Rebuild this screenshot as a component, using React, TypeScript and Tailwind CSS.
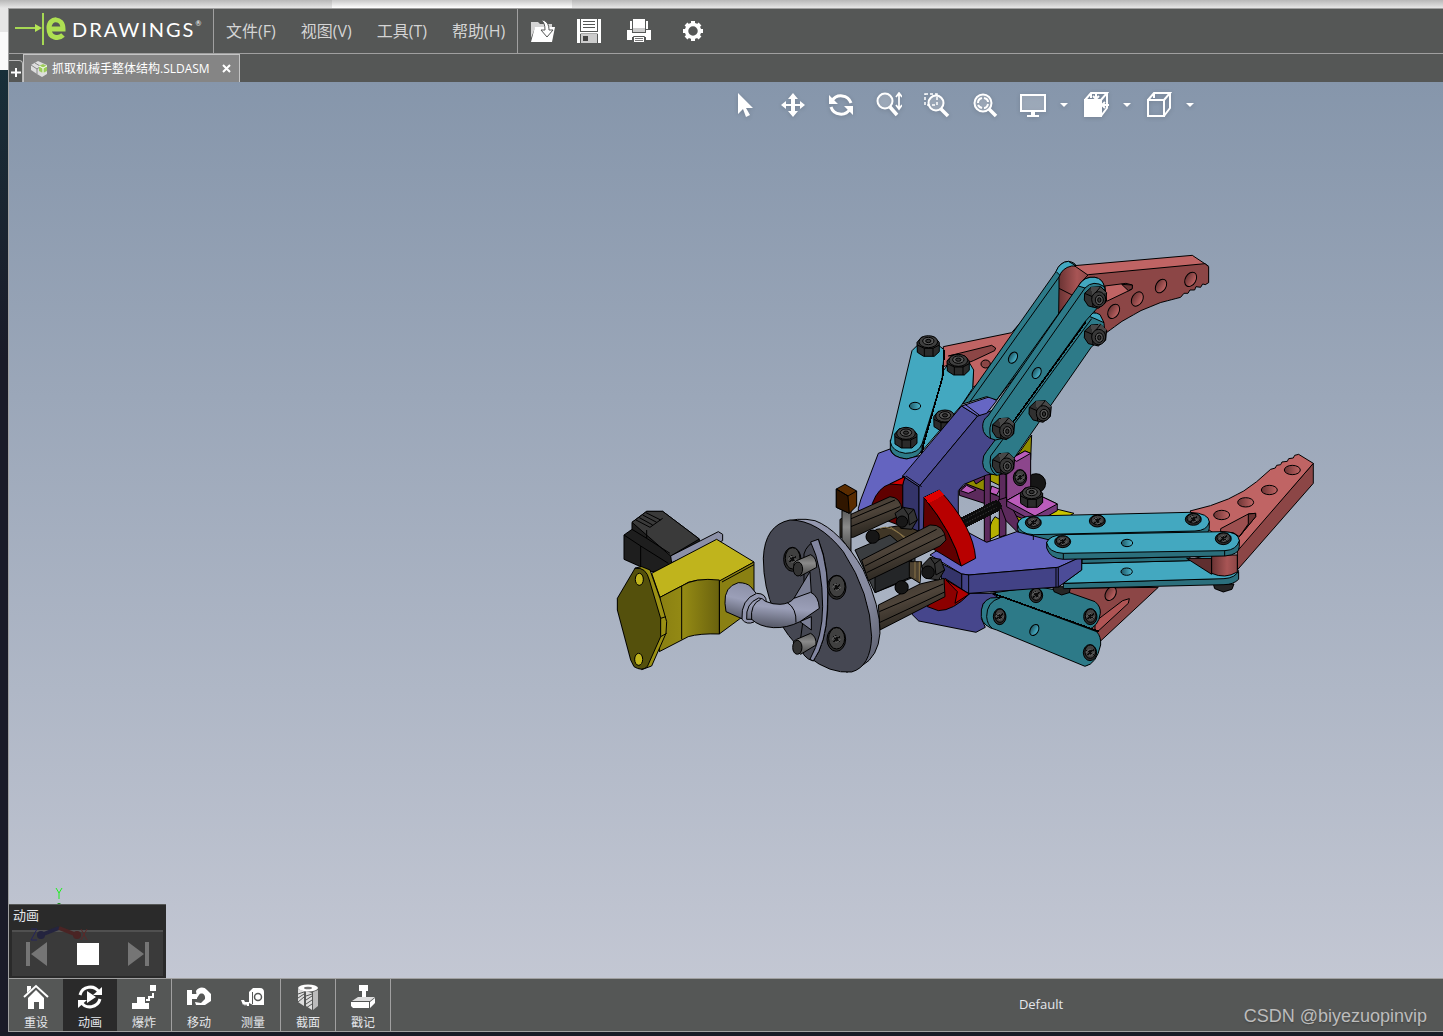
import type { ReactNode } from "react";

type IconProps = { children: ReactNode; w?: number; h?: number };

const Icon = ({ children, w = 26, h = 26 }: IconProps) => (
  <svg width={w} height={h} viewBox={`0 0 ${w} ${h}`} fill="none" aria-hidden="true">
    {children}
  </svg>
);

const menus = ["文件(F)", "视图(V)", "工具(T)", "帮助(H)"];

const fileTools = [
  {
    label: "打开",
    wide: false,
    icon: (
      <Icon>
        <path d="M1 4h7l2 2h12v4H5L1 20z" fill="#d4d4d4" />
        <path d="M5 9h20l-3 15H1z" fill="#fff" />
        <path d="M11 2c6 0 8 5 8 10h4l-6 7-6-7h4c0-5-1-8-4-10z" fill="#fff" stroke="#555756" />
      </Icon>
    ),
  },
  {
    label: "保存",
    wide: false,
    icon: (
      <Icon>
        <path d="M1 1h24v24H1z" fill="#fff" />
        <path d="M4.500 1v12M21.500 1v12M4.500 25v-9h17v9" stroke="#555756" />
        <path d="M7 3.500h12M7 6.500h12M7 9.500h12M4 13.500h18" stroke="#555756" />
        <path d="M5 16h16v9H5z" fill="#ccc" />
        <path d="M7 18h5v5H7z" fill="#444" />
      </Icon>
    ),
  },
  {
    label: "打印",
    wide: true,
    icon: (
      <Icon>
        <path d="M4 3h2v8H4zM20 3h2v8h-2zM7 1h12v9H7z" fill="#fff" />
        <path d="M7 10h12v4H7z" fill="#ccc" />
        <path d="M1 12h5v3h14v-3h5v10h-5v-3H6v3H1z" fill="#fff" />
        <path d="M7.500 18.500h11v6h-11z" fill="#fff" stroke="#555756" />
        <path d="M9 20.500h8M9 22.500h8" stroke="#777" />
      </Icon>
    ),
  },
  {
    label: "选项",
    wide: true,
    icon: (
      <Icon>
        <circle cx="13" cy="13" r="6.500" stroke="#fff" strokeWidth="3.500" />
        <path d="M13 3v3M13 20v3M3 13h3M20 13h3M6 6l2 2M18 18l2 2M20 6l-2 2M8 18l-2 2" stroke="#fff" strokeWidth="4" />
      </Icon>
    ),
  },
];

const Lens = () => (
  <>
    <circle cx="11" cy="11" r="8.500" fill="#fff3" stroke="#fff" strokeWidth="2" />
    <path d="m17 17 7 7" stroke="#fff" strokeWidth="3.500" />
  </>
);

const Cube = ({ solid = false }: { solid?: boolean }) => (
  <>
    <path d="M2 8h16v16H2z" fill={solid ? "#fff" : "none"} stroke="#fff" strokeWidth="2" />
    <path d="m2 8 6-7h16l-6 7M24 1v15l-6 8M8 2v4" stroke="#fff" strokeWidth="2" />
  </>
);

const mouseTools = [
  { label: "选择", icon: <path d="M6 1v21l5-5 3 8 4-2-4-7h7z" fill="#fff" /> },
  {
    label: "平移",
    icon: <path d="M13 1l5 6h-3v5h5V9l5 4-5 4v-3h-5v5h3l-5 6-5-6h3v-5H6v3l-5-4 5-4v3h5V7H8z" fill="#fff" />,
  },
  {
    label: "旋转",
    icon: (
      <>
        <path d="M4 9A10.500 10.500 0 0 1 23 11M22 17A10.500 10.500 0 0 1 3 15" stroke="#fff" strokeWidth="3" />
        <path d="M1 3v9h9zM25 23v-9h-9z" fill="#fff" />
      </>
    ),
  },
  {
    label: "缩放",
    icon: (
      <>
        <circle cx="9" cy="9" r="7.500" fill="#fff3" stroke="#fff" strokeWidth="2" />
        <path d="m14 15 7 8" stroke="#fff" strokeWidth="3.500" />
        <path d="M23 2v14M20 5l3-4 3 4M20 13l3 4 3-4" stroke="#fff" strokeWidth="1.700" />
      </>
    ),
  },
  {
    label: "局部放大",
    icon: (
      <>
        <path d="M1 2h12v11H1z" stroke="#fff" strokeWidth="1.500" strokeDasharray="3 2" />
        <circle cx="12" cy="11" r="7.500" fill="#fff3" stroke="#fff" strokeWidth="2" />
        <path d="m17 17 7 7" stroke="#fff" strokeWidth="3.500" />
      </>
    ),
  },
  {
    label: "整屏显示",
    icon: (
      <>
        <Lens />
        <path d="M6 11q0-4 4-5M12 6q4 1 4 4M16 12q-1 4-4 4M10 16q-3-1-4-3" stroke="#fff" strokeWidth="2" />
      </>
    ),
  },
];

const displayTools = [
  {
    label: "显示",
    icon: (
      <>
        <path d="M1 3h24v16H1z" fill="#fff3" stroke="#fff" strokeWidth="2" />
        <path d="M11 20h4v3h4v2H7v-2h4z" fill="#fff" />
      </>
    ),
  },
  {
    label: "透视图",
    icon: (
      <>
        <Cube solid />
        <path d="M13 0v7M10 4l3 3 3-3M26 13h-7M22 10l-3 3 3 3" stroke="#fff" strokeWidth="2" />
      </>
    ),
  },
  { label: "视图方向", icon: <Cube /> },
];

const bottomTools = [
  {
    label: "重设",
    active: false,
    line: false,
    icon: (
      <>
        <path d="M1 13 13 2l12 11" stroke="#fff" strokeWidth="2" />
        <path d="M4 2h4v3L4 9zM5 14l8-8 8 8v11h-5v-7h-5v7H5z" fill="#fff" />
      </>
    ),
  },
  {
    label: "动画",
    active: true,
    line: false,
    icon: (
      <>
        <path d="M3 11A10.500 10.500 0 0 1 22 8M23 15A10.500 10.500 0 0 1 4 18" stroke="#fff" strokeWidth="3" />
        <path d="M25 3v8h-9zM1 24v-8h9zM10 7l9 6-9 6z" fill="#fff" />
      </>
    ),
  },
  {
    label: "爆炸",
    active: false,
    line: true,
    icon: (
      <>
        <path d="M1 19h5v-6h8v6h4v6H1zM19 1h6v6h-6z" fill="#fff" />
        <path d="M22 9v4h-4v3h-3" stroke="#fff" strokeWidth="2" />
      </>
    ),
  },
  {
    label: "移动",
    active: false,
    line: false,
    icon: (
      <>
        <path d="M1 6h5v4h5v5H6v6H1z" fill="#fff" />
        <path d="M10 7c2-4 8-5 11-1l4 4v7l-6 4h-9l-1-3 6 1 4-4c1-5-4-7-6-4l-2 3z" fill="#fff" />
      </>
    ),
  },
  {
    label: "测量",
    active: false,
    line: true,
    icon: (
      <>
        <path d="M9 8l4-4h7c3 0 4 2 4 4v13H13l-4-2z" fill="#fff" />
        <circle cx="18" cy="13" r="3.500" stroke="#555756" strokeWidth="1.500" />
        <path d="M1 16h3l1 2h4v4H7l-1-2-1 2-1-2-1 1z" fill="#fff" />
        <path d="M12.500 8v12" stroke="#555756" />
      </>
    ),
  },
  {
    label: "截面",
    active: false,
    line: true,
    icon: (
      <>
        <ellipse cx="13" cy="4" rx="10" ry="3.500" fill="#fff" />
        <path d="M3 5l6 2v15l-6-4zM11 7l6 2v17l-6-4z" fill="#ddd" />
        <path d="M18 8l5-2v16l-5 4z" fill="#bbb" />
        <path d="m3 10 6-2M3 14l6-4M3 18l6-5M11 12l6-2M11 16l6-4M11 20l6-4M11 24l6-4" stroke="#555756" />
        <ellipse cx="13" cy="4" rx="4" ry="1.300" fill="#777" />
      </>
    ),
  },
  {
    label: "戳记",
    active: false,
    line: true,
    icon: (
      <>
        <path d="M9 1h9v6h-2v8h-4V7H9z" fill="#fff" />
        <path d="m2 17 6-4h17l-5 4z" fill="#ddd" />
        <path d="M1 18h18v6H3l-2-2zM20 18l5-4v5l-5 5z" fill="#fff" />
      </>
    ),
  },
];

const TEAL = "#2d7a88";
const CYAN = "#43a8c0";
const ROSE = "#c06464";
const BRICK = "#8c4646";

type Spot = { x: number; y: number };

const Nut = ({ x, y }: Spot) => (
  <g transform={`translate(${x} ${y})`}>
    <path d="M-33-12-14-30 15-32 33-14 30 16 8 33-22 26-34 8z" fill="#303030" />
    <path d="M-14-30 15-32 33-14-10-2z" fill="#484848" stroke="none" />
    <path d="M-33-12-10-2M-10-2-8 30M-10-2 15-32" fill="none" />
    <ellipse cx="9" cy="6" rx="21" ry="23" fill="#383838" />
    <ellipse cx="11" cy="8" rx="12" ry="14" fill="#555" />
    <ellipse cx="11" cy="8" rx="5" ry="7" fill="#333" />
  </g>
);

const TopNut = ({ x, y }: Spot) => (
  <g transform={`translate(${x} ${y})`}>
    <path d="M-34-10-20-26H18L33-10V18L18 32H-14L-33 20z" fill="#2b2b2b" />
    <path d="M-33-2-12 8H14L33-2M-12 8V32M14 8V32" fill="none" />
    <ellipse cy="-12" rx="28" ry="18" fill="#3f3f3f" />
    <ellipse cy="-14" rx="17" ry="11" fill="#555" />
    <ellipse cy="-14" rx="8" ry="5" fill="#333" />
  </g>
);

const Screw = ({ x, y, rx = 24, ry = 18 }: Spot & { rx?: number; ry?: number }) => (
  <g transform={`translate(${x} ${y})`}>
    <ellipse rx={rx} ry={ry} fill="#2a2a2a" />
    <ellipse cx="1" cy="-3" rx={rx - 4} ry={ry - 4} fill="#404040" />
    <path d="M-10-8 10 7M11-9-9 7M-1-12 2 9" stroke="#0c0c0c" strokeWidth="4" />
    <path d="M-12 1Q-8-10 2-10M12-1Q10 8-2 9" stroke="#666" fill="none" />
  </g>
);

const Hole = ({ x, y, rx = 17, ry = 11, tilt = 0, fill = "url(#bore)" }: Spot & { rx?: number; ry?: number; tilt?: number; fill?: string }) => (
  <ellipse rx={rx} ry={ry} fill={fill} transform={`translate(${x} ${y}) rotate(${tilt})`} />
);

// Each part is drawn in its own frame, three units to the pixel
const Part = ({ x, y, children }: Spot & { children: ReactNode }) => (
  <g transform={`translate(${x} ${y}) scale(.3333)`}>{children}</g>
);

const Defs = () => (
  <defs>
    <linearGradient id="bore" x2="1">
      <stop stopColor="#1f5663" />
      <stop offset="1" stopColor="#4cb8d0" />
    </linearGradient>
    <linearGradient id="boreRose" x2="1">
      <stop stopColor="#6c3434" />
      <stop offset="1" stopColor="#c06464" />
    </linearGradient>
    <linearGradient id="knuckle" x2="1">
      <stop stopColor="#6a3333" />
      <stop offset=".6" stopColor="#a85555" />
      <stop offset="1" stopColor="#8c4646" />
    </linearGradient>
    <linearGradient id="pipe" x1=".6" x2=".4" y2="1">
      <stop stopColor="#8b8fa6" />
      <stop offset=".45" stopColor="#9b9fb8" />
      <stop offset="1" stopColor="#555866" />
    </linearGradient>
    <linearGradient id="rim" x2="1" y2="1">
      <stop stopColor="#9a9eb6" />
      <stop offset=".7" stopColor="#85899e" />
      <stop offset="1" stopColor="#555866" />
    </linearGradient>
    <linearGradient id="rod" x2=".4" y2="1">
      <stop stopColor="#3c352c" />
      <stop offset=".5" stopColor="#4e443a" />
      <stop offset="1" stopColor="#25221c" />
    </linearGradient>
    <linearGradient id="pin" x2="0" y2="1">
      <stop stopColor="#5c5c5c" />
      <stop offset=".4" stopColor="#8a8a8a" />
      <stop offset="1" stopColor="#484848" />
    </linearGradient>
    <linearGradient id="olive" x2="1">
      <stop stopColor="#8a8012" />
      <stop offset=".4" stopColor="#948a14" />
      <stop offset="1" stopColor="#6a620e" />
    </linearGradient>
  </defs>
);

const RearFinger = () => (
  <Part x={840} y={320}>
    <path d="M310 80 515 38 600-60 560 40 440 180 398 202 400 150 370 120 310 140z" fill={ROSE} />
    <path d="M325 108 455 76 467 84 464 92 400 122 385 128 355 102z" fill="#8c4646" />
    <Hole x={437} y={132} rx={14} ry={12} fill="#8c4646" />
    <path d="M308 155 328 128H388L401 150 398 205 365 255 240 400 245 375 300 180z" fill={CYAN} />
    <TopNut x={315} y={300} />
    <path d="M151 360V388Q160 414 200 417 238 412 246 388V365z" fill={TEAL} />
    <path d="M216 92 232 76H296L313 90 306 180 246 372Q236 400 196 400 156 394 151 366z" fill={CYAN} />
    <path d="M313 90 308 170 250 375 246 404" fill="none" strokeWidth="5" />
    <Hole x={225} y={258} />
    <TopNut x={265} y={77} />
    <TopNut x={355} y={133} />
    <TopNut x={198} y={352} />
    <path d="M55 565 62 540 115 400 150 387Q155 412 200 417L246 405 330 340 200 475 190 600H55z" fill="#6464c0" />
  </Part>
);

const Hub = () => (
  <Part x={840} y={460}>
    <path d="M575-75 572 0 520 0 540-25z" fill="#8f8b00" />
    <path d="M600 150 620 140 702 160 650 190z" fill="#c8c400" />
    <path d="M375 60 440 40V118Q405 118 386 98z" fill="#8f8b00" />
    <path d="M450 10 482 25V78L450 62z" fill="#a39e00" />
    <path d="M446 240Q444 195 465 170L482 180V222z" fill="#b5b000" />
    <path d="M515 155 548 160 540 200 518 190z" fill="#a39e00" />
    <path d="M358 88 380 72 500 118 605 170 592 196 470 142 358 106z" fill="#5c2a5c" />
    <path d="M362 92 380 76 408 90 385 100zM455 78 480 88 470 105 450 98zM500 168 530 178 510 190z" fill="#bb5cbb" />
    <path d="M433-20H451V247H433zM478 0H498V225L478 232z" fill="#5c2a5c" />
    <path d="M475 120 500 112 548 205 538 222 498 182z" fill="#5c2a5c" />
    <path d="M400 60 433 40V56L408 72z" fill="#5c2a5c" />
    <circle cx="588" cy="70" r="29" fill="#161616" />
    <path d="M515-5 555-27 572-20V82L500 122V20z" fill="#8c468c" />
    <path d="M515-5 555-27 572-20 530 4z" fill="#bb5cbb" />
    <Screw x={540} y={53} rx={20} ry={24} />
    <path d="M500 122 560 88 652 132V152L588 188 500 140z" fill="#74397a" />
    <path d="M500 122 560 88 652 132 585 168z" fill="#bb5cbb" />
    <TopNut x={575} y={110} />
    <path d="m370 188 98-50" stroke="#0c0c0c" strokeWidth="34" strokeLinecap="round" />
    <path d="m372 192 98-50M368 180l98-50" stroke="#3a3a3a" strokeWidth="3" strokeDasharray="4 5" />
  </Part>
);

const LowerFinger = () => (
  <>
    <Part x={1000} y={440}>
      <path d="M205 445 475 442 302 603 245 575z" fill={BRICK} />
      <Hole x={332} y={461} rx={15} ry={22} tilt={30} fill="url(#boreRose)" />
      <path d="M285 545 368 482 388 476 385 490 296 572 285 571z" fill="#b05454" />
      <path d="M-30 460 110 440 200 455 285 485Q303 500 301 520 296 560 262 570L-30 475z" fill={TEAL} />
      <Screw x={108} y={466} rx={20} ry={22} />
      <Screw x={271} y={530} rx={20} ry={24} />
    </Part>
    <Part x={840} y={460}>
      <path d="M215 462 236 435 370 400H455L478 415 430 430 424 475 436 502 408 517 236 483z" fill="#46468c" />
      <path d="M424 470Q420 425 452 414L490 412 770 515Q784 530 782 555 770 612 735 619L470 510Q428 500 424 470z" fill={TEAL} />
      <path d="M480 414Q440 425 440 470 442 494 456 504" fill="none" />
      <path d="m458 400 320 115" strokeWidth="5" />
      <Hole x={583} y={510} rx={12} ry={18} tilt={30} />
      <Screw x={479} y={470} rx={19} ry={24} />
      <Screw x={750} y={578} rx={20} ry={24} />
    </Part>
  </>
);

const RightFinger = () => (
  <Part x={1000} y={440}>
    <path d="M158 440H212L208 458 185 465 162 455zM640 432H702L696 448 670 456 644 446z" fill="#262626" />
    <path d="M190 430 672 415 716 395V418Q700 434 672 434L190 446z" fill="#2b6f7c" />
    <path d="M190 430 246 370 560 362 640 340 716 392Q706 414 672 416z" fill={CYAN} />
    <path d="M246 358 570 350V362L246 370z" fill="#2b6f7c" />
    <Hole x={380} y={395} />
    <path d="M560 355H635V403z" fill="#5f2f2f" />
    <path d="M940 70V130L712 390V330z" fill={BRICK} />
    <path d="M570 213Q700 185 770 125L812 88 826 84 830 76 842 74 846 66 862 64 866 56 880 54 884 46 896 43 940 70 715 330 620 265z" fill={ROSE} />
    <path d="M662 266 745 222 767 220V230L718 290 700 278 662 275z" fill="#9c4f4f" />
    <path d="M745 222V252L718 290 767 230V220z" fill="#6c3434" />
    <Hole x={877} y={90} rx={24} ry={14} fill="url(#boreRose)" />
    <Hole x={808} y={150} rx={24} ry={14} fill="url(#boreRose)" />
    <Hole x={737} y={187} rx={24} ry={14} fill="url(#boreRose)" />
    <Hole x={665} y={225} rx={24} ry={14} fill="url(#boreRose)" />
    <path d="M635 345H712V396Q675 418 635 400z" fill="url(#knuckle)" />
    <path d="M52 250V268Q62 298 100 300L590 288Q628 285 628 265V245z" fill="#2b6f7c" />
    <path d="M52 252Q58 228 100 228L570 217Q628 220 628 246 622 272 585 273L100 284Q58 282 52 252z" fill={CYAN} />
    <Screw x={100} y={248} />
    <Screw x={292} y={243} />
    <Screw x={580} y={238} />
  </Part>
);

const RightBracket = () => (
  <Part x={840} y={460}>
    <path d="M270 285 380 215 440 247 530 215 640 243 720 300 655 322 387 345 365 342z" fill="#6464c0" />
    <path d="M365 342 387 345 655 322 725 290V330L655 381 387 400 365 396z" fill="#424286" />
    <path d="M655 322 725 290V330L655 381z" fill="#4c4c98" />
    <path d="M300 308 365 342V398L305 362z" fill="#34346a" />
    <path d="M386 345V400M648 322V381" />
  </Part>
);

const FrontLink = () => (
  <Part x={1000} y={440}>
    <path d="M140 306V324Q150 356 190 358L675 348Q718 344 718 320V300z" fill="#2b6f7c" />
    <path d="M140 308Q148 286 190 284L670 275Q716 276 718 302 710 330 675 332L190 340Q146 338 140 308z" fill={CYAN} />
    <path d="M190 340V358M674 332V348M100 284V300" />
    <Hole x={381} y={309} />
    <Screw x={188} y={305} />
    <Screw x={670} y={296} />
  </Part>
);

const CenterBracket = () => (
  <Part x={840} y={320}>
    <path d="M188 468 237 500V645L188 620z" fill="#34346a" />
    <path d="M188 468 365 258 413 288 237 500z" fill="#50509c" />
    <path d="M237 500 413 288 460 270 470 460 440 465 372 493 355 512V640L390 650 300 660H237z" fill="#46468a" />
    <path d="M365 258 450 230 470 242 440 280 413 288z" fill="#6666c4" />
    <path d="m198 468 47 32M374 252l45 34" />
  </Part>
);

const TopFinger = () => (
  <Part x={960} y={240}>
    <path d="M8 492 290 92Q300 66 325 64 345 66 352 82L330 200 110 480 80 470z" fill={TEAL} />
    <path d="M288 94Q300 66 325 64L352 80 320 96 300 106z" fill={CYAN} />
    <path d="M28 488 305 100M110 480 390 90M116 484 380 115" fill="none" />
    <Hole x={159} y={353} rx={12} ry={18} tilt={30} />
    <path d="M297 145V112Q305 84 335 78H380L388 105 296 220z" fill="url(#knuckle)" />
    <path d="M297 145 336 165" />
    <path d="M343 77 697 46 745 78 385 106z" fill={ROSE} />
    <path d="M385 104 735 71 746 80V128L736 134 728 132 722 142 708 140 704 150 690 150 684 160 672 160 662 172Q540 195 430 285L400 205 370 120z" fill={BRICK} />
    <path d="M435 138 498 130 517 135 515 148 440 184z" fill={ROSE} />
    <path d="M485 133 505 152 517 146V135z" fill="#6c3434" />
    <Hole x={692} y={118} rx={16} ry={23} tilt={30} fill="url(#boreRose)" />
    <Hole x={603} y={138} rx={15} ry={22} tilt={30} fill="url(#boreRose)" />
    <Hole x={532} y={177} rx={16} ry={23} tilt={30} fill="url(#boreRose)" />
    <Hole x={461} y={214} rx={16} ry={23} tilt={30} fill="url(#boreRose)" />
    <path d="M80 634 385 228Q400 214 418 225L432 250 436 290 395 320 242 540 162 655Q150 702 112 706 68 702 68 668 68 645 80 634z" fill={TEAL} />
    <path d="M385 228Q400 212 420 224L432 248 405 236z" fill={CYAN} />
    <path d="M92 648 395 236M92 648Q84 690 110 706" fill="none" />
    <path d="M84 528 355 138Q372 108 405 112 430 118 434 145V180L375 245 160 545Q150 598 106 600 68 592 68 560 68 538 84 528z" fill={TEAL} />
    <path d="M355 138Q372 108 405 112 428 116 433 140 400 118 375 144z" fill={CYAN} />
    <path d="M100 536 375 144M100 536Q84 560 92 597" fill="none" />
    <path d="M160 545 378 245" strokeWidth="5" />
    <Hole x={230} y={399} rx={12} ry={18} tilt={30} />
    <Nut x={407} y={172} />
    <Nut x={407} y={285} />
    <Nut x={241} y={514} />
    <Nut x={131} y={566} />
    <Nut x={131} y={671} />
  </Part>
);

const Rods = () => (
  <Part x={840} y={460}>
    <path d="M97 130Q115 82 150 72L195 50 188 72V200L97 165z" fill="#600000" />
    <path d="M150 72 195 50 188 75z" fill="#d00000" />
    <path d="M262 440 315 355 388 402Q340 452 295 452z" fill="#8c0000" />
    <path d="M318 360 352 395 345 430 388 402z" fill="#b00000" />
    <path d="M250 215 252 112Q340 220 364 318L305 282 250 250z" fill="#600000" />
    <path d="M252 112 298 90Q400 200 407 295L364 318Q340 220 252 112z" fill="#b80000" />
    <path d="M252 112 298 90 312 105 267 130z" fill="#e00000" stroke="none" />
    <path d="M85 225 110 208 190 195 240 215 220 255 110 250z" fill="#403626" />
    <path d="M120 205Q150 190 200 240M150 200 200 235" stroke="#8a7448" fill="none" />
    <path d="M0 178 150 110Q182 112 186 150L178 168 40 232H0z" fill="url(#rod)" />
    <path d="M15 184 165 120M20 205 180 140" />
    <path d="M45 270 150 225 225 290V350L105 398z" fill="#3a3d40" />
    <path d="M105 340 215 300V350L105 398z" fill="#242628" />
    <path d="M208 305H245L240 370 208 350z" fill="#4c4130" />
    <path d="M225 305V355M238 305V365" stroke="#8a7448" />
    <path d="M65 300 270 195Q312 192 318 240L300 258 85 362z" fill="url(#rod)" />
    <path d="M75 318 290 208M80 338 312 225" />
    <path d="M115 435 240 372 312 355 315 410 120 510z" fill="url(#rod)" />
    <path d="M118 455 310 372M118 488 314 396" />
    <circle cx="98" cy="230" r="20" fill="#161616" />
    <circle cx="185" cy="382" r="20" fill="#161616" />
    <path d="M165 160 190 142 222 148 232 180 215 208 182 205z" fill="#333" />
    <path d="M190 142 205 165 222 148M205 165 208 195 232 180" fill="none" />
    <circle cx="186" cy="185" r="17" fill="#181818" />
    <path d="M245 318 270 292 302 298 314 330 296 360 258 355z" fill="#333" />
    <path d="M270 292 284 312 302 298M284 312 288 345 314 330" fill="none" />
    <circle cx="264" cy="337" r="19" fill="#181818" />
  </Part>
);

const Flange = () => (
  <Part x={600} y={470}>
    <path d="M726 122H753V245L726 208z" fill="url(#pin)" />
    <path d="M709 57 735 43 770 63V108L748 130 709 112z" fill="#5a2c00" />
    <path d="M709 57 744 78 748 130 709 112z" fill="#301600" />
    <path d="M709 57 744 78 770 63" fill="none" />
    <path d="M545 160Q590 140 645 152 720 180 790 300 842 410 840 490 835 560 785 588L740 607z" fill="url(#rim)" />
    <path d="M490 265Q494 165 570 150 655 150 730 245 812 370 815 500 812 590 755 606 690 612 625 560 490 440 490 265z" fill="#454752" />
    <Screw x={577} y={268} rx={26} ry={36} />
    <path d="M612 252Q620 222 655 208 690 290 683 420 678 520 640 573 605 565 600 520L612 430z" fill="#454752" />
    <path d="M632 216 655 208Q690 300 682 420 678 520 640 573L630 568Q668 500 668 410 668 290 632 216z" fill="#8286a0" />
    <path d="M582 385 630 305 634 370 600 384zM600 455 634 480V440z" fill="#7c8096" />
    <path d="M590 272 632 254Q650 262 650 292L602 318Q580 305 582 280z" fill="url(#pin)" />
    <ellipse cx="594" cy="297" rx="14" ry="21" fill="#333" />
    <path d="M590 508 632 490Q650 500 648 525L602 553Q580 540 580 515z" fill="url(#pin)" />
    <ellipse cx="592" cy="532" rx="14" ry="21" fill="#333" />
    <Screw x={710} y={352} rx={28} ry={36} />
    <Screw x={709} y={508} rx={28} ry={36} />
  </Part>
);

const Drive = () => (
  <Part x={600} y={470}>
    <path d="M72 195 96 178V157L140 124 188 124 298 207 300 240 210 300 155 305 72 268z" fill="#1e1e1e" />
    <path d="M96 157 140 124 188 124 298 207 212 258z" fill="#3a3a3a" />
    <path d="M96 178 140 205 210 250M72 195 122 228 205 280M122 228V292M140 205V180M108 150 150 172 188 145M118 143l40 22M128 135l42 22M138 128l44 22" fill="none" />
    <path d="M212 258 355 185 368 193V212L215 278z" fill="#8c90a8" />
    <path d="M155 310 350 208 462 276 358 335Q280 320 245 348L180 382z" fill="#c0b41c" />
    <path d="M358 333 462 276V415L358 492z" fill="#8a8012" />
    <path d="M180 382 245 348Q285 322 358 330V492Q300 490 265 500L178 545z" fill="url(#olive)" />
    <path d="M245 348V508M366 336 462 284" fill="none" />
    <path d="M105 294 125 290 150 300 180 385 200 455 198 490 155 588 125 599z" fill="#9a9014" />
    <path d="M105 295Q138 290 148 330L182 445V500L142 590Q125 605 102 590L92 570 52 420V385z" fill="#54500c" />
    <path d="M182 445 198 440M182 500 200 490" />
    <ellipse cx="118" cy="328" rx="12" ry="18" fill="#c0b41c" />
    <ellipse cx="116" cy="568" rx="12" ry="18" fill="#c0b41c" />
    <path d="M375 400Q372 350 415 338 440 338 452 350L470 372 430 448 378 425z" fill="url(#pipe)" />
    <path d="M426 448Q422 388 470 370 500 370 499 398L462 456Q440 466 426 448z" fill="#9296ae" />
    <path d="M440 448Q436 400 476 384 488 384 496 394 520 404 540 403 568 402 582 385L632 367Q656 378 658 415L600 455Q560 475 520 473 478 470 455 448z" fill="url(#pipe)" />
    <path d="M455 450Q450 402 482 388M562 398Q590 415 588 458" fill="none" />
  </Part>
);

const Model = () => (
  <svg
    className="h-full w-full"
    viewBox="9 82 1434 896"
    stroke="#000"
    strokeWidth="3"
    strokeLinejoin="round"
    shapeRendering="crispEdges"
    role="img"
    aria-label="抓取机械手整体结构"
  >
    <Defs />
    <RearFinger />
    <Hub />
    <LowerFinger />
    <RightFinger />
    <RightBracket />
    <FrontLink />
    <CenterBracket />
    <TopFinger />
    <Rods />
    <Flange />
    <Drive />
  </svg>
);

const Triad = () => (
  <svg className="pointer-events-none absolute bottom-8 left-5" width="64" height="60" viewBox="0 0 64 60" fill="none" aria-hidden="true">
    <path d="m27 2 3 5 3-5M30 7v6" stroke="#1df01d" />
    <path d="M28 18q2-2 4 0z" fill="#0a8a0a" />
    <path d="M2 43h6L2 54h6" stroke="#25255c" />
    <path d="m52 43 6 11M58 43l-6 11" stroke="#5c2828" />
    <path d="m30 42-18 7" stroke="#24243f" strokeWidth="4" />
    <path d="m30 42 18 7" stroke="#4a2424" strokeWidth="4" />
    <circle cx="12" cy="49" r="4" fill="#24243f" />
    <circle cx="48" cy="49" r="4" fill="#4a2424" />
  </svg>
);

const AnimationPanel = () => (
  <section className="absolute bottom-0 left-0 border-t border-[#555756] bg-[#2a2a2a] px-[3px] pb-[2px]">
    <h2 className="h-[25px] px-px text-[13px] leading-5 text-gray-200">动画</h2>
    <div className="flex h-[46px] w-[151px] items-center justify-between border-t-2 border-[#505050] bg-[#3a3a3a] px-3">
      <button aria-label="上一步">
        <Icon>
          <path d="M2 1h4v24H2zM23 1v24L7 13z" fill="#757575" />
        </Icon>
      </button>
      <button aria-label="停止">
        <Icon w={22} h={22}>
          <path d="M0 0h22v22H0z" fill="#fff" />
        </Icon>
      </button>
      <button aria-label="下一步">
        <Icon>
          <path d="M20 1h4v24h-4zM3 1v24l16-12z" fill="#757575" />
        </Icon>
      </button>
    </div>
  </section>
);

const Logo = () => (
  <div className="flex w-[205px] items-center gap-[6px] border-r border-[#a0a0a0] pb-1 pl-[6px]">
    <svg width="51" height="34" viewBox="0 0 51 34" fill="none" aria-hidden="true">
      <path d="M0 16h22" stroke="#a6d854" strokeWidth="2" />
      <path d="m20 12 7 4-7 4z" fill="#b5e655" />
      <path d="M28 1v32" stroke="#a6d854" strokeWidth="2" />
      <path d="M35 17h13c0-12-14-12-14-1 0 11 10 11 14 7" stroke="#aee052" strokeWidth="5" />
    </svg>
    <span className="flex font-[Lato,sans-serif] text-[20px] leading-6 tracking-widest text-white">
      DRAWINGS<small className="text-[7px] leading-3">®</small>
    </span>
  </div>
);

const Header = () => (
  <header className="flex h-[46px] border-y border-[#a0a0a0]">
    <Logo />
    <nav className="flex items-center gap-[25px] border-r border-[#a0a0a0] px-3">
      {menus.map((name) => (
        <button key={name} className="text-[16px] text-[#d4d4d4]">
          {name}
        </button>
      ))}
    </nav>
    <div className="flex items-center gap-5 pl-3">
      {fileTools.map((tool) => (
        <button key={tool.label} aria-label={tool.label} className={tool.wide ? "px-1" : ""}>
          {tool.icon}
        </button>
      ))}
    </div>
  </header>
);

const TabBar = () => (
  <div className="flex h-7 items-end">
    <button aria-label="新建标签" className="flex h-[22px] w-[14px] items-center justify-center rounded-tr border-t border-r border-[#b8b8b8]">
      <Icon w={10} h={10}>
        <path d="M5 1v9M0 5.500h10" stroke="#fff" strokeWidth="2" />
      </Icon>
    </button>
    <div className="flex h-7 items-center border border-b-0 border-[#c4c4c4] bg-[#858585] pr-2 pl-[6px] text-white">
      <Icon w={18} h={18}>
        <path d="M1 5 8 1l9 4v9l-5 3-5-3-6-4z" fill="#ddd" />
        <path d="M1 5 7 9v5M7 9l4-3M5 3l5 3" stroke="#888" />
        <path d="m9 6 4-2 4 2v5l-4 2-4-2z" fill="#9ccc5a" />
        <path d="m9 6 4 2 4-2M13 8v5" stroke="#fff" />
      </Icon>
      <span className="ml-1 text-[12px]">抓取机械手整体结构.SLDASM</span>
      <button aria-label="关闭" className="ml-3">
        <Icon w={9} h={9}>
          <path d="m1 1 7 7M8 1 1 8" stroke="#fff" strokeWidth="2" />
        </Icon>
      </button>
    </div>
  </div>
);

const ViewToolbar = () => (
  <div className="absolute top-[10px] left-1/2 flex items-center gap-[22px] pl-[6px] drop-shadow-sm">
    {mouseTools.map((tool) => (
      <button key={tool.label} aria-label={tool.label}>
        <Icon>{tool.icon}</Icon>
      </button>
    ))}
    <div className="flex gap-[15px]">
      {displayTools.map((tool) => (
        <button key={tool.label} aria-label={tool.label} className="flex items-center gap-[14px]">
          <Icon>{tool.icon}</Icon>
          <Icon w={8} h={5}>
            <path d="M0 0h8L4 4z" fill="#fff" />
          </Icon>
        </button>
      ))}
    </div>
  </div>
);

const BottomBar = () => (
  <footer className="flex h-[54px] border-y border-[#a0a0a0]">
    {bottomTools.map((tool) => (
      <button
        key={tool.label}
        className={`box-content flex w-[54px] shrink-0 flex-col items-center gap-[5px] pt-[5px] text-[12px] leading-4 text-gray-200 ${
          tool.active ? "bg-[#2a2a2a]" : ""
        } ${tool.line ? "border-r border-[#a0a0a0]" : ""}`}
      >
        <Icon>{tool.icon}</Icon>
        {tool.label}
      </button>
    ))}
    <p className="flex flex-1 items-center justify-center pl-[248px] text-[13px] text-gray-200">Default</p>
  </footer>
);

export default function App() {
  return (
    <div className="relative flex min-h-screen flex-col bg-[#181b26] font-['Open_Sans','Noto_Sans_CJK_SC',sans-serif]">
      <div className="flex h-2 bg-gradient-to-b from-[#b8b8b8] to-[#e6e6e6]">
        <div className="ml-[23%] w-1/6 bg-gradient-to-b from-[#c8c8c8] to-white" />
      </div>
      <div className="flex flex-1">
        <div className="flex w-2 flex-col">
          <div className="h-6 bg-[#e6e6e6]" />
          <div className="h-[38px] bg-[#fafafa]" />
          <div className="flex-1 bg-gradient-to-b from-[#182f39] to-[#1a1b28] to-30%" />
        </div>
        <main className="flex min-w-0 flex-1 flex-col border-l border-[#a0a0a0] bg-[#555756]">
          <Header />
          <TabBar />
          <div className="relative flex-1 bg-gradient-to-b from-[#8696ab] to-[#c3c7d3]">
            <div className="absolute inset-0">
              <Model />
            </div>
            <ViewToolbar />
            <AnimationPanel />
            <Triad />
          </div>
          <BottomBar />
        </main>
      </div>
      <div className="h-1" />
      <p className="absolute right-4 bottom-2 font-['Liberation_Sans',sans-serif] text-[18px] leading-6 text-[#bcbcbc] text-shadow-sm">
        CSDN @biyezuopinvip
      </p>
    </div>
  );
}
